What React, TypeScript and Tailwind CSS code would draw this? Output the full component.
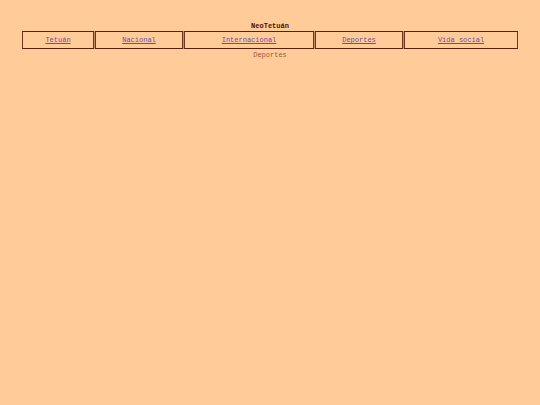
const sections = ['Tetuán', 'Nacional', 'Internacional', 'Deportes', 'Vida social'];

export default function App() {
  return (
    <div className="min-h-screen bg-[#ffcc99] px-[22px] pt-[22px] text-center font-['Liberation_Mono',monospace] text-[7px] leading-[8px] text-[#99583a]">
      <h1 className="mb-px font-bold text-[#4a1005]">NeoTetuán</h1>
      <nav>
        <ul className="grid grid-cols-[72fr_88fr_130fr_88fr_114fr] gap-px bg-[#c48a63]">
          {sections.map((name) => (
            <li
              key={name}
              className="border border-x-[#6e3520] border-y-[#5a1e0c] bg-[#ffcc99] py-1"
            >
              <a href="#" className="text-[#6a4cb0] underline">
                {name}
              </a>
            </li>
          ))}
        </ul>
      </nav>
      <main className="pt-[2px]">Deportes</main>
    </div>
  );
}
